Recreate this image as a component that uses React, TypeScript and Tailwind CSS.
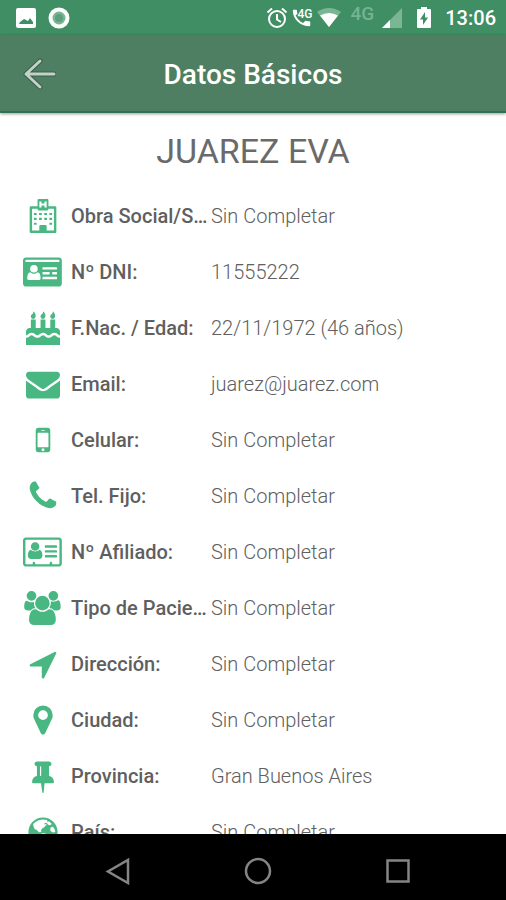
import type { ReactNode } from 'react';

type IconName =
  | 'hospital'
  | 'idCard'
  | 'cake'
  | 'envelope'
  | 'mobile'
  | 'phone'
  | 'idCardOutline'
  | 'users'
  | 'arrow'
  | 'marker'
  | 'pin'
  | 'globe';

const flame =
  'q0 77-36 118.5t-92 41.5q-53 0-90.5-37.5t-37.5-90.5q0-29 9.5-51t23.5-34 31-28 31-31.5 23.5-44.5 9.5-67q38 0 83 74t45 150z';

const icons: Record<IconName, { width: number; shape: ReactNode }> = {
  hospital: {
    width: 1792,
    shape: (
      <>
        <path
          fillRule="evenodd"
          d="M608 64q0-64 64-64h448q64 0 64 64v320h352q64 0 64 64v1280q0 64-64 64H256q-64 0-64-64V448q0-64 64-64h352zM704 128v320h112V336h160v112h112V128H976v112H816V128zM608 512H320v1152h384v-224q0-64 64-64h256q64 0 64 64v224h384V512h-288q0 96-64 96H672q-64 0-64-96z"
        />
        <path d="M416 736h144v112H416zM688 736h144v112H688zM960 736h144v112H960zM1232 736h144v112h-144zM416 992h144v112H416zM688 992h144v112H688zM960 992h144v112H960zM1232 992h144v112h-144zM416 1248h144v112H416zM1232 1248h144v112h-144zM736 1408h320v320H736z" />
      </>
    ),
  },
  idCard: {
    width: 2048,
    shape: (
      <path
        fillRule="evenodd"
        d="M160 128h1728q66 0 113 47t47 113v1216q0 66-47 113t-113 47H160q-66 0-113-47T0 1504V288q0-66 47-113t113-47zM128 288v80h1792v-80q0-32-32-32H160q-32 0-32 32zM928 1240q0-328-170-328-82 80-182 80t-182-80q-170 0-170 328 0 76 64 76h576q64 0 64-76zM776 724a200 200 0 1 0-400 0 200 200 0 1 0 400 0zM1056 1152q-32 0-32 32v64q0 32 32 32h704q32 0 32-32v-64q0-32-32-32zM1056 896q-32 0-32 32v64q0 32 32 32h320q32 0 32-32v-64q0-32-32-32zM1568 896q-32 0-32 32v64q0 32 32 32h192q32 0 32-32v-64q0-32-32-32zM1056 640q-32 0-32 32v64q0 32 32 32h704q32 0 32-32v-64q0-32-32-32z"
      />
    ),
  },
  cake: {
    width: 1792,
    shape: (
      <path
        d={
          'M1792 1408v384h-1792v-384q45 0 85-14t59-27.5 47-37.5q30-27 51.5-38t56.5-11q24 0 44 7t31 15 33 27q29 25 47 38t58 27 86 14q45 0 85-14.5t58-27 48-37.5q21-19 32.5-27t31-15 43.5-7q35 0 56.5 11t51.5 38q28 24 47 37.5t59 27.5 85 14 85-14 59-27.5 47-37.5q30-27 51.5-38t56.5-11q34 0 55.5 11t51.5 38q28 24 47 37.5t59 27.5 85 14zm0-320v192q-24 0-44-7t-31-15-33-27q-29-25-47-38t-58-27-85-14q-46 0-86 14t-58 27-47 38q-22 19-33 27t-31 15-44 7q-35 0-56.5-11t-51.5-38q-29-25-47-38t-58-27-86-14q-45 0-85 14.5t-58 27-48 37.5q-21 19-32.5 27t-31 15-43.5 7q-35 0-56.5-11t-51.5-38q-28-24-47-37.5t-59-27.5-85-14q-46 0-86 14t-58 27-47 38q-30 27-51.5 38t-56.5 11v-192q0-80 56-136t136-56h64v-448h256v448h256v-448h256v448h256v-448h256v448h64q80 0 136 56t56 136z' +
          'M512 256' + flame + 'M1024 256' + flame + 'M1536 256' + flame
        }
      />
    ),
  },
  envelope: {
    width: 1792,
    shape: (
      <path d="M1792 710v794q0 66-47 113t-113 47h-1472q-66 0-113-47t-47-113v-794q44 49 101 87 362 246 497 345 57 42 92.5 65.5t94.5 48 110 24.5h2q51 0 110-24.5t94.5-48 92.5-65.5q170-123 498-345 57-39 100-87zm0-294q0 79-49 151t-122 123q-376 261-468 325-10 7-42.5 31t-54 38.5-52 32.5-57.5 27-50 9h-2q-23 0-50-9t-57.5-27-52-32.5-54-38.5-42.5-31q-91-64-262-182.5t-205-142.5q-62-42-117-115.5t-55-136.5q0-78 41.5-130t118.5-52h1472q65 0 112.5 47t47.5 113z" />
    ),
  },
  mobile: {
    width: 1792,
    shape: (
      <path d="M976 1408q0-33-23.5-56.5t-56.5-23.5-56.5 23.5-23.5 56.5 23.5 56.5 56.5 23.5 56.5-23.5 23.5-56.5zm208-160v-704q0-13-9.5-22.5t-22.5-9.5h-512q-13 0-22.5 9.5t-9.5 22.5v704q0 13 9.5 22.5t22.5 9.5h512q13 0 22.5-9.5t9.5-22.5zm-192-848q0-16-16-16h-160q-16 0-16 16t16 16h160q16 0 16-16zm288-16v1024q0 52-38 90t-90 38h-512q-52 0-90-38t-38-90v-1024q0-52 38-90t90-38h512q52 0 90 38t38 90z" />
    ),
  },
  phone: {
    width: 1792,
    shape: (
      <path d="M1600 1240q0 27-10 70.5t-21 68.5q-21 50-122 106-94 51-186 51-27 0-53-3.5t-57-12.5-47-14.5-55.5-20.5-49.5-18q-98-35-175-83-127-79-264-216t-216-264q-48-77-83-175-3-9-18-49.5t-20.5-55.5-14.5-47-12.5-57-3.5-53q0-92 51-186 56-101 106-122 25-11 68.5-21t70.5-10q14 0 21 3 18 6 53 76 11 19 30 54t35 63.5 31 53.5q3 4 17.5 25t21.5 35.5 7 28.5q0 20-28.5 50t-62 55-62 53-28.5 46q0 9 5 22.5t8.5 20.5 14 24 11.5 19q76 137 174 235t235 174q2 1 19 11.5t24 14 20.5 8.5 22.5 5q18 0 46-28.5t53-62 55-62 50-28.5q14 0 28.5 7t35.5 21.5 25 17.5q25 15 53.5 31t63.5 35 54 30q70 35 76 53 3 7 3 21z" />
    ),
  },
  idCardOutline: {
    width: 2048,
    shape: (
      <path
        fillRule="evenodd"
        d="M160 128h1728q66 0 113 47t47 113v1216q0 66-47 113t-113 47H160q-66 0-113-47T0 1504V288q0-66 47-113t113-47zM160 256q-32 0-32 32v1216q0 32 32 32h352v-64q0-64 64-64t64 64v64h768v-64q0-64 64-64t64 64v64h352q32 0 32-32V288q0-32-32-32zM1024 1091q0 76-50 125t-126 49H432q-76 0-126-49t-50-125q0-260 150-310 90 85 234 85t234-85q150 50 150 310zM864 612a224 224 0 1 1-448 0 224 224 0 1 1 448 0zM1184 1056h576q32 0 32 32v64q0 32-32 32h-576q-32 0-32-32v-64q0-32 32-32zM1184 800h576q32 0 32 32v64q0 32-32 32h-576q-32 0-32-32v-64q0-32 32-32zM1184 544h576q32 0 32 32v64q0 32-32 32h-576q-32 0-32-32v-64q0-32 32-32z"
      />
    ),
  },
  users: {
    width: 2048,
    shape: (
      <path d="M657 896q-162 5-265 128h-134q-82 0-138-40.5t-56-118.5q0-353 124-353 6 0 43.5 21t97.5 42.5 119 21.5q67 0 133-23-5 37-5 66 0 159 81 286zm1071 637q0 120-73 189.5t-194 69.5h-874q-121 0-194-69.5t-73-189.5q0-53 3.5-103.5t14-109 26.5-108.5 43-97.5 62-81 85.5-53.5 111.5-20q10 0 43 21.5t73 48 107 48 135 21.5 135-21.5 107-48 73-48 43-21.5q61 0 111.5 20t85.5 53.5 62 81 43 97.5 26.5 108.5 14 109 3.5 103.5zm-1024-1277q0 106-75 181t-181 75-181-75-75-181 75-181 181-75 181 75 75 181zm704 384q0 159-112.5 271.5t-271.5 112.5-271.5-112.5-112.5-271.5 112.5-271.5 271.5-112.5 271.5 112.5 112.5 271.5zm576 225q0 78-56 118.5t-138 40.5h-134q-103-123-265-128 81-127 81-286 0-29-5-66 66 23 133 23 59 0 119-21.5t97.5-42.5 43.5-21q124 0 124 353zm-128-609q0 106-75 181t-181 75-181-75-75-181 75-181 181-75 181 75 75 181z" />
    ),
  },
  arrow: {
    width: 1792,
    shape: (
      <path d="M1593 349l-640 1280q-17 35-57 35-5 0-15-2-22-5-35.5-22.5t-13.5-39.5v-576h-576q-22 0-39.5-13.5t-22.5-35.5 4-42 29-30l1280-640q13-7 29-7 27 0 45 19 15 14 18.5 34.5t-6.5 39.5z" />
    ),
  },
  marker: {
    width: 1792,
    shape: (
      <path d="M1152 640q0-106-75-181t-181-75-181 75-75 181 75 181 181 75 181-75 75-181zm256 0q0 109-33 179l-364 774q-16 33-47.5 52t-67.5 19-67.5-19-46.5-52l-365-774q-33-70-33-179 0-212 150-362t362-150 362 150 150 362z" />
    ),
  },
  pin: {
    width: 1792,
    shape: (
      <path d="M800 864v-448q0-14-9-23t-23-9-23 9-9 23v448q0 14 9 23t23 9 23-9 9-23zm672 352q0 26-19 45t-45 19h-429l-51 483q-2 12-10.5 20.5t-20.5 8.5h-1q-27 0-32-27l-76-485h-404q-26 0-45-19t-19-45q0-123 78.5-221.5t177.5-98.5v-512q-52 0-90-38t-38-90 38-90 90-38h640q52 0 90 38t38 90-38 90-90 38v512q99 0 177.5 98.5t78.5 221.5z" />
    ),
  },
  globe: {
    width: 1792,
    shape: (
      <path
        fillRule="evenodd"
        d="M896 128a768 768 0 1 1 0 1536 768 768 0 1 1 0-1536zM860 240q-200 20-360 130l-120 110 10 100 60 160 130 70 100 100 130-20-20-90 90-110 110-60 20-70 90-20-50-60-90 20 40-90 110 20 60-70-80-30 40-60zM1210 330l-110 90 60 90 110 30 90-60zM1400 600l-120 90 10 150 130 80 130-20-50-180zM820 960l-60 130 50 170 110 90 30 160 140-60 60-180 110-110-90-100-160-90z"
      />
    ),
  },
};

function Icon({ name }: { name: IconName }) {
  const { width, shape } = icons[name];
  return (
    <svg
      viewBox={`0 0 ${width} 1792`}
      className="h-[34px] w-auto fill-[#48b781]"
      aria-hidden="true"
    >
      {shape}
    </svg>
  );
}

const fields: { icon: IconName; label: string; value: string }[] = [
  { icon: 'hospital', label: 'Obra Social/S…', value: 'Sin Completar' },
  { icon: 'idCard', label: 'Nº DNI:', value: '11555222' },
  { icon: 'cake', label: 'F.Nac. / Edad:', value: '22/11/1972 (46 años)' },
  { icon: 'envelope', label: 'Email:', value: 'juarez@juarez.com' },
  { icon: 'mobile', label: 'Celular:', value: 'Sin Completar' },
  { icon: 'phone', label: 'Tel. Fijo:', value: 'Sin Completar' },
  { icon: 'idCardOutline', label: 'Nº Afiliado:', value: 'Sin Completar' },
  { icon: 'users', label: 'Tipo de Pacie…', value: 'Sin Completar' },
  { icon: 'arrow', label: 'Dirección:', value: 'Sin Completar' },
  { icon: 'marker', label: 'Ciudad:', value: 'Sin Completar' },
  { icon: 'pin', label: 'Provincia:', value: 'Gran Buenos Aires' },
  { icon: 'globe', label: 'País:', value: 'Sin Completar' },
];

function StatusBar() {
  return (
    <div className="flex h-[35px] shrink-0 items-center bg-[#408e63] pl-4 pr-[10px] text-white">
      <svg viewBox="0 0 20 20" className="size-5" fill="currentColor" aria-hidden="true">
        <path
          fillRule="evenodd"
          d="M2 0h16q2 0 2 2v16q0 2-2 2H2q-2 0-2-2V2q0-2 2-2zM3 16h14v-2l-3-4-2 3-2-1-2-1-4 3z"
        />
      </svg>
      <svg viewBox="0 0 22 22" className="ml-3 size-[22px]" aria-hidden="true">
        <circle cx="11" cy="11" r="10.5" fill="#fff" />
        <circle cx="11" cy="11" r="6.5" fill="#7bb694" />
        <circle cx="11" cy="11" r="4" fill="#5f9f7b" />
      </svg>

      <svg
        viewBox="0 0 22 22"
        className="ml-auto size-[22px]"
        fill="none"
        stroke="currentColor"
        strokeWidth="2"
        aria-hidden="true"
      >
        <circle cx="11" cy="12" r="8" />
        <path d="M11 7v5.5l4 2.5M1.500 5.500l4.500-4M20.500 5.500l-4.500-4" />
      </svg>
      <div className="relative ml-[3px] size-[22px]">
        <svg viewBox="0 0 24 24" className="size-[22px]" fill="currentColor" aria-hidden="true">
          <path d="M5 9c1.440 3.500 4.500 7 8.210 8.380l2.200-2.200c.27-.27.67-.36 1.020-.24 1.120.37 2.330.57 3.570.57.55 0 1 .45 1 1V20c0 .55-.45 1-1 1-9.390 0-18-7.610-18-17 0-.55.45-1 1-1h2.500c.55 0 1 .45 1 1 0 1.250.2 2.450.57 3.570z" />
        </svg>
        <span className="absolute left-[7px] top-px text-xs font-medium leading-3">4G</span>
      </div>
      <svg viewBox="0 0 24 20" className="ml-1 h-5 w-6" aria-hidden="true">
        <path d="M0 4Q12-4 24 4L12 19z" fill="#7bb694" />
        <path d="M3 7.5q9-5 18 0L12 19z" fill="#fff" />
      </svg>
      <span className="mb-2 ml-[10px] text-[19px] font-medium leading-5 text-[#75b391]">4G</span>
      <svg viewBox="0 0 20 20" className="ml-2 size-5" aria-hidden="true">
        <path d="M20 0v20H0z" fill="#7bb694" />
        <path d="M8 12v8H0z" fill="#fff" />
      </svg>
      <svg viewBox="0 0 14 21" className="ml-[15px] h-[21px] w-[14px]" fill="currentColor" aria-hidden="true">
        <path
          fillRule="evenodd"
          d="M4 0h6v2h3q1 0 1 1v17q0 1-1 1H1q-1 0-1-1V3q0-1 1-1h3zM8 5l-5 7.5h3V18l5-7.500H8z"
        />
      </svg>
      <span className="ml-[14px] text-[20px] font-medium leading-6">13:06</span>
    </div>
  );
}

function Header() {
  return (
    <header className="relative z-10 flex h-[78px] shrink-0 items-center border-b-2 border-[#2f7155] bg-[#4e7f62] px-[22px] pt-[2px] shadow-[0_1px_3px_rgba(0,0,0,0.4)]">
      <button type="button" aria-label="Volver" className="flex">
        <svg
          viewBox="0 0 34 34"
          className="size-[34px]"
          fill="none"
          strokeLinecap="round"
          strokeLinejoin="round"
          aria-hidden="true"
        >
          <path d="M18 4L4 17l14 13M4 17h28" stroke="#3a5f4a" strokeWidth="5" />
          <path d="M18 4L4 17l14 13M4 17h28" stroke="#c3d1c8" strokeWidth="3" />
        </svg>
      </button>
      <h1 className="flex-1 pr-[34px] pt-[2px] text-center text-[28px] font-medium leading-8 text-white">
        Datos Básicos
      </h1>
    </header>
  );
}

function NavBar() {
  return (
    <nav className="flex h-[66px] shrink-0 items-center justify-around bg-black pl-12 pr-[38px] pt-2 text-[#858585]">
      <button type="button" aria-label="Atrás">
        <svg viewBox="0 0 28 28" className="size-7" fill="none" stroke="currentColor" strokeWidth="2.5" aria-hidden="true">
          <path d="M24 3v23L4 14.5z" />
        </svg>
      </button>
      <button type="button" aria-label="Inicio">
        <svg viewBox="0 0 28 28" className="size-7" fill="none" stroke="currentColor" strokeWidth="2.5" aria-hidden="true">
          <circle cx="14" cy="14" r="12" />
        </svg>
      </button>
      <button type="button" aria-label="Recientes">
        <svg viewBox="0 0 28 28" className="size-7" fill="none" stroke="currentColor" strokeWidth="2.5" aria-hidden="true">
          <rect x="3.5" y="3.5" width="21" height="21" />
        </svg>
      </button>
    </nav>
  );
}

export default function App() {
  return (
    <div className="flex h-screen flex-col bg-white font-['Roboto',sans-serif]">
      <StatusBar />
      <Header />
      <main className="min-h-0 flex-1 overflow-y-auto [scrollbar-width:none]">
        <h2 className="pb-[17px] pt-[18px] text-center text-[34px] leading-10 text-[#6a6a6a]">
          JUAREZ EVA
        </h2>
        <dl>
          {fields.map((field) => (
            <div key={field.label} className="flex h-14 items-center px-[22px] text-[20px] leading-6">
              <div className="flex w-[41px] shrink-0 justify-center">
                <Icon name={field.icon} />
              </div>
              <dt className="ml-2 w-[140px] shrink-0 whitespace-nowrap font-medium text-[#5f5f5f]">
                {field.label}
              </dt>
              <dd className="flex-1 font-light text-[#606060]">{field.value}</dd>
            </div>
          ))}
        </dl>
      </main>
      <NavBar />
    </div>
  );
}
